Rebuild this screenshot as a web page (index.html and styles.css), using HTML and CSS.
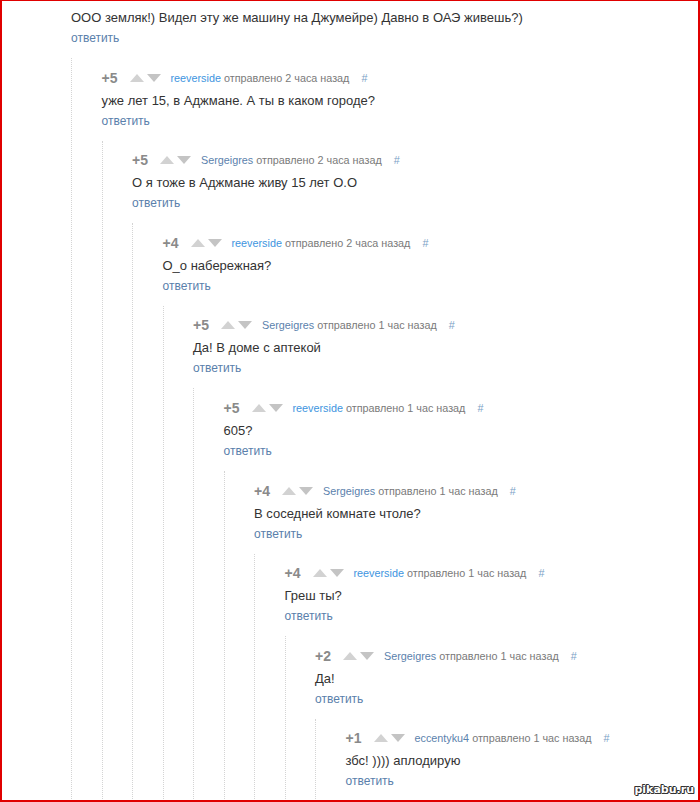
FILE: index.html
```html
<!DOCTYPE html>
<html lang="ru">
<head>
    <meta charset="UTF-8">
    <title>Комментарии</title>
    <link rel="stylesheet" href="styles.css">
</head>
<body>
    <div class="frame">
        <div class="comment root">
            <div class="text">ООО земляк!) Видел эту же машину на Джумейре) Давно в ОАЭ живешь?)</div>
            <a class="reply">ответить</a>

            <div class="children">
                <div class="comment">
                    <div class="head">
                        <span class="rating">+5</span>
                        <span class="vote up"></span><span class="vote down"></span>
                        <a class="user author">reeverside</a>
                        <span class="meta">отправлено 2 часа назад</span>
                        <a class="hash">#</a>
                    </div>
                    <div class="text">уже лет 15, в Аджмане. А ты в каком городе?</div>
                    <a class="reply">ответить</a>

                    <div class="children">
                        <div class="comment">
                            <div class="head">
                                <span class="rating">+5</span>
                                <span class="vote up"></span><span class="vote down"></span>
                                <a class="user">Sergeigres</a>
                                <span class="meta">отправлено 2 часа назад</span>
                                <a class="hash">#</a>
                            </div>
                            <div class="text">О я тоже в Аджмане живу 15 лет О.О</div>
                            <a class="reply">ответить</a>

                            <div class="children">
                                <div class="comment">
                                    <div class="head">
                                        <span class="rating">+4</span>
                                        <span class="vote up"></span><span class="vote down"></span>
                                        <a class="user author">reeverside</a>
                                        <span class="meta">отправлено 2 часа назад</span>
                                        <a class="hash">#</a>
                                    </div>
                                    <div class="text">О_о набережная?</div>
                                    <a class="reply">ответить</a>

                                    <div class="children">
                                        <div class="comment">
                                            <div class="head">
                                                <span class="rating">+5</span>
                                                <span class="vote up"></span><span class="vote down"></span>
                                                <a class="user">Sergeigres</a>
                                                <span class="meta">отправлено 1 час назад</span>
                                                <a class="hash">#</a>
                                            </div>
                                            <div class="text">Да! В доме с аптекой</div>
                                            <a class="reply">ответить</a>

                                            <div class="children">
                                                <div class="comment">
                                                    <div class="head">
                                                        <span class="rating">+5</span>
                                                        <span class="vote up"></span><span class="vote down"></span>
                                                        <a class="user author">reeverside</a>
                                                        <span class="meta">отправлено 1 час назад</span>
                                                        <a class="hash">#</a>
                                                    </div>
                                                    <div class="text">605?</div>
                                                    <a class="reply">ответить</a>

                                                    <div class="children">
                                                        <div class="comment">
                                                            <div class="head">
                                                                <span class="rating">+4</span>
                                                                <span class="vote up"></span><span class="vote down"></span>
                                                                <a class="user">Sergeigres</a>
                                                                <span class="meta">отправлено 1 час назад</span>
                                                                <a class="hash">#</a>
                                                            </div>
                                                            <div class="text">В соседней комнате чтоле?</div>
                                                            <a class="reply">ответить</a>

                                                            <div class="children">
                                                                <div class="comment">
                                                                    <div class="head">
                                                                        <span class="rating">+4</span>
                                                                        <span class="vote up"></span><span class="vote down"></span>
                                                                        <a class="user author">reeverside</a>
                                                                        <span class="meta">отправлено 1 час назад</span>
                                                                        <a class="hash">#</a>
                                                                    </div>
                                                                    <div class="text">Греш ты?</div>
                                                                    <a class="reply">ответить</a>

                                                                    <div class="children">
                                                                        <div class="comment">
                                                                            <div class="head">
                                                                                <span class="rating">+2</span>
                                                                                <span class="vote up"></span><span class="vote down"></span>
                                                                                <a class="user">Sergeigres</a>
                                                                                <span class="meta">отправлено 1 час назад</span>
                                                                                <a class="hash">#</a>
                                                                            </div>
                                                                            <div class="text">Да!</div>
                                                                            <a class="reply">ответить</a>

                                                                            <div class="children">
                                                                                <div class="comment">
                                                                                    <div class="head">
                                                                                        <span class="rating">+1</span>
                                                                                        <span class="vote up"></span><span class="vote down"></span>
                                                                                        <a class="user">eccentyku4</a>
                                                                                        <span class="meta">отправлено 1 час назад</span>
                                                                                        <a class="hash">#</a>
                                                                                    </div>
                                                                                    <div class="text">збс! )))) аплодирую</div>
                                                                                    <a class="reply">ответить</a>
                                                                                </div>
                                                                            </div>
                                                                        </div>
                                                                    </div>
                                                                </div>
                                                            </div>
                                                        </div>
                                                    </div>
                                                </div>
                                            </div>
                                        </div>
                                    </div>
                                </div>
                            </div>
                        </div>
                    </div>
                </div>
            </div>
        </div>

        <div class="watermark">pikabu.ru</div>
    </div>
</body>
</html>
```

FILE: styles.css
```css
html, body {
    margin: 0;
    padding: 0;
    background: #fff;
}
.frame {
    position: relative;
    box-sizing: border-box;
    width: 700px;
    height: 802px;
    overflow: hidden;
    border: 2px solid #e00000;
    border-top-width: 1px;
    padding: 7px 0 0 69px;
    font-family: "Liberation Sans", Arial, sans-serif;
    color: #333;
}
.comment {
    display: flex;
    flex-direction: column;
    align-items: flex-start;
}
.head {
    display: flex;
    align-items: center;
    height: 18px;
    margin-bottom: 4px;
    font-size: 10.8px;
    white-space: nowrap;
}
.rating {
    font-size: 14px;
    font-weight: bold;
    color: #8a8a8a;
    width: 28px;
}
.vote {
    width: 0;
    height: 0;
    border-left: 7px solid transparent;
    border-right: 7px solid transparent;
}
.vote.up {
    border-bottom: 8px solid #d2d2d2;
    margin-right: 3px;
}
.vote.down {
    border-top: 8px solid #c4c4c4;
    margin-right: 10px;
}
.user {
    color: #5b82ad;
    margin-right: 3px;
}
.user.author {
    color: #3d95e0;
}
.meta {
    color: #7a7a7a;
}
.hash {
    color: #7b9fc6;
    margin-left: 12px;
}
.text {
    font-size: 13px;
    line-height: 20px;
}
.reply {
    font-size: 12px;
    line-height: 20px;
    color: #5a80ab;
}
.children {
    align-self: stretch;
    margin-top: 10px;
    padding: 10.6px 0 24px 29.5px;
    border-left: 1px dotted #d4d4d4;
}
.watermark {
    position: absolute;
    right: 4px;
    bottom: 4px;
    font-family: "DejaVu Sans", sans-serif;
    font-size: 11px;
    font-weight: bold;
    color: #fff;
    text-shadow: -1px 0 #333, 1px 0 #333, 0 -1px #333, 0 1px #333, 1px 1px #333, -1px -1px #333;
}
```
